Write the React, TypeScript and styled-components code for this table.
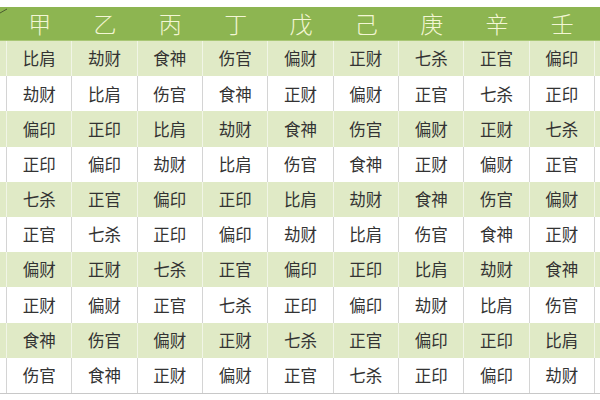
import React from "react";
import styled, { createGlobalStyle } from "styled-components";

const Global = createGlobalStyle`
  html, body { margin: 0; padding: 0; background: #ffffff; }
  body { width: 600px; height: 400px; overflow: hidden; }
`;

const Page = styled.div`
  width: 600px;
  height: 400px;
  padding-top: 7px;
  box-sizing: border-box;
  background: #ffffff;
  font-family: "Noto Sans CJK SC", "Noto Sans", sans-serif;
`;

const Table = styled.div`
  display: flex;
  flex-direction: column;
  border-bottom: 1px solid #c8c8c8;
`;

const cols = "7px repeat(9, 65.33px) 5px";

const HeaderRow = styled.div`
  display: grid;
  grid-template-columns: ${cols};
  height: 34px;
  background: #8db551;
  border-bottom: 1px solid #a9c776;
  box-sizing: border-box;
`;

const HeaderCell = styled.div`
  position: relative;
  display: flex;
  align-items: center;
  justify-content: center;
  color: #f3f6d4;
  font-size: 23px;
  font-weight: 200;
  line-height: 1;
`;

const Diagonal = styled.svg`
  position: absolute;
  left: 0;
  top: 0;
`;

const Row = styled.div<{ $green: boolean }>`
  display: grid;
  grid-template-columns: ${cols};
  height: 35.2px;
  background: ${(p) => (p.$green ? "#e0eac6" : "#ffffff")};
`;

const Cell = styled.div<{ $green: boolean; $edge?: boolean }>`
  display: flex;
  align-items: center;
  justify-content: center;
  font-size: 16.5px;
  color: #333333;
  border-right: ${(p) =>
    p.$edge ? "none" : `1px solid ${p.$green ? "#f1f5e6" : "#d4d4d4"}`};
  box-sizing: border-box;
  line-height: 1;
`;

const heads = ["甲", "乙", "丙", "丁", "戊", "己", "庚", "辛", "壬"];

const rows = [
  ["比肩", "劫财", "食神", "伤官", "偏财", "正财", "七杀", "正官", "偏印"],
  ["劫财", "比肩", "伤官", "食神", "正财", "偏财", "正官", "七杀", "正印"],
  ["偏印", "正印", "比肩", "劫财", "食神", "伤官", "偏财", "正财", "七杀"],
  ["正印", "偏印", "劫财", "比肩", "伤官", "食神", "正财", "偏财", "正官"],
  ["七杀", "正官", "偏印", "正印", "比肩", "劫财", "食神", "伤官", "偏财"],
  ["正官", "七杀", "正印", "偏印", "劫财", "比肩", "伤官", "食神", "正财"],
  ["偏财", "正财", "七杀", "正官", "偏印", "正印", "比肩", "劫财", "食神"],
  ["正财", "偏财", "正官", "七杀", "正印", "偏印", "劫财", "比肩", "伤官"],
  ["食神", "伤官", "偏财", "正财", "七杀", "正官", "偏印", "正印", "比肩"],
  ["伤官", "食神", "正财", "偏财", "正官", "七杀", "正印", "偏印", "劫财"],
];

export default function App() {
  return (
    <>
      <Global />
      <Page>
        <Table>
          <HeaderRow>
            <HeaderCell>
              <Diagonal width="7" height="34" viewBox="0 0 7 34">
                <line x1="0" y1="6" x2="7" y2="2" stroke="#4a5a30" strokeWidth="1" />
              </Diagonal>
            </HeaderCell>
            {heads.map((h) => (
              <HeaderCell key={h}>{h}</HeaderCell>
            ))}
            <HeaderCell />
          </HeaderRow>
          {rows.map((r, i) => {
            const green = i % 2 === 0;
            return (
              <Row key={i} $green={green}>
                <Cell $green={green} />
                {r.map((c, j) => (
                  <Cell key={j} $green={green}>
                    {c}
                  </Cell>
                ))}
                <Cell $green={green} $edge />
              </Row>
            );
          })}
        </Table>
      </Page>
    </>
  );
}
